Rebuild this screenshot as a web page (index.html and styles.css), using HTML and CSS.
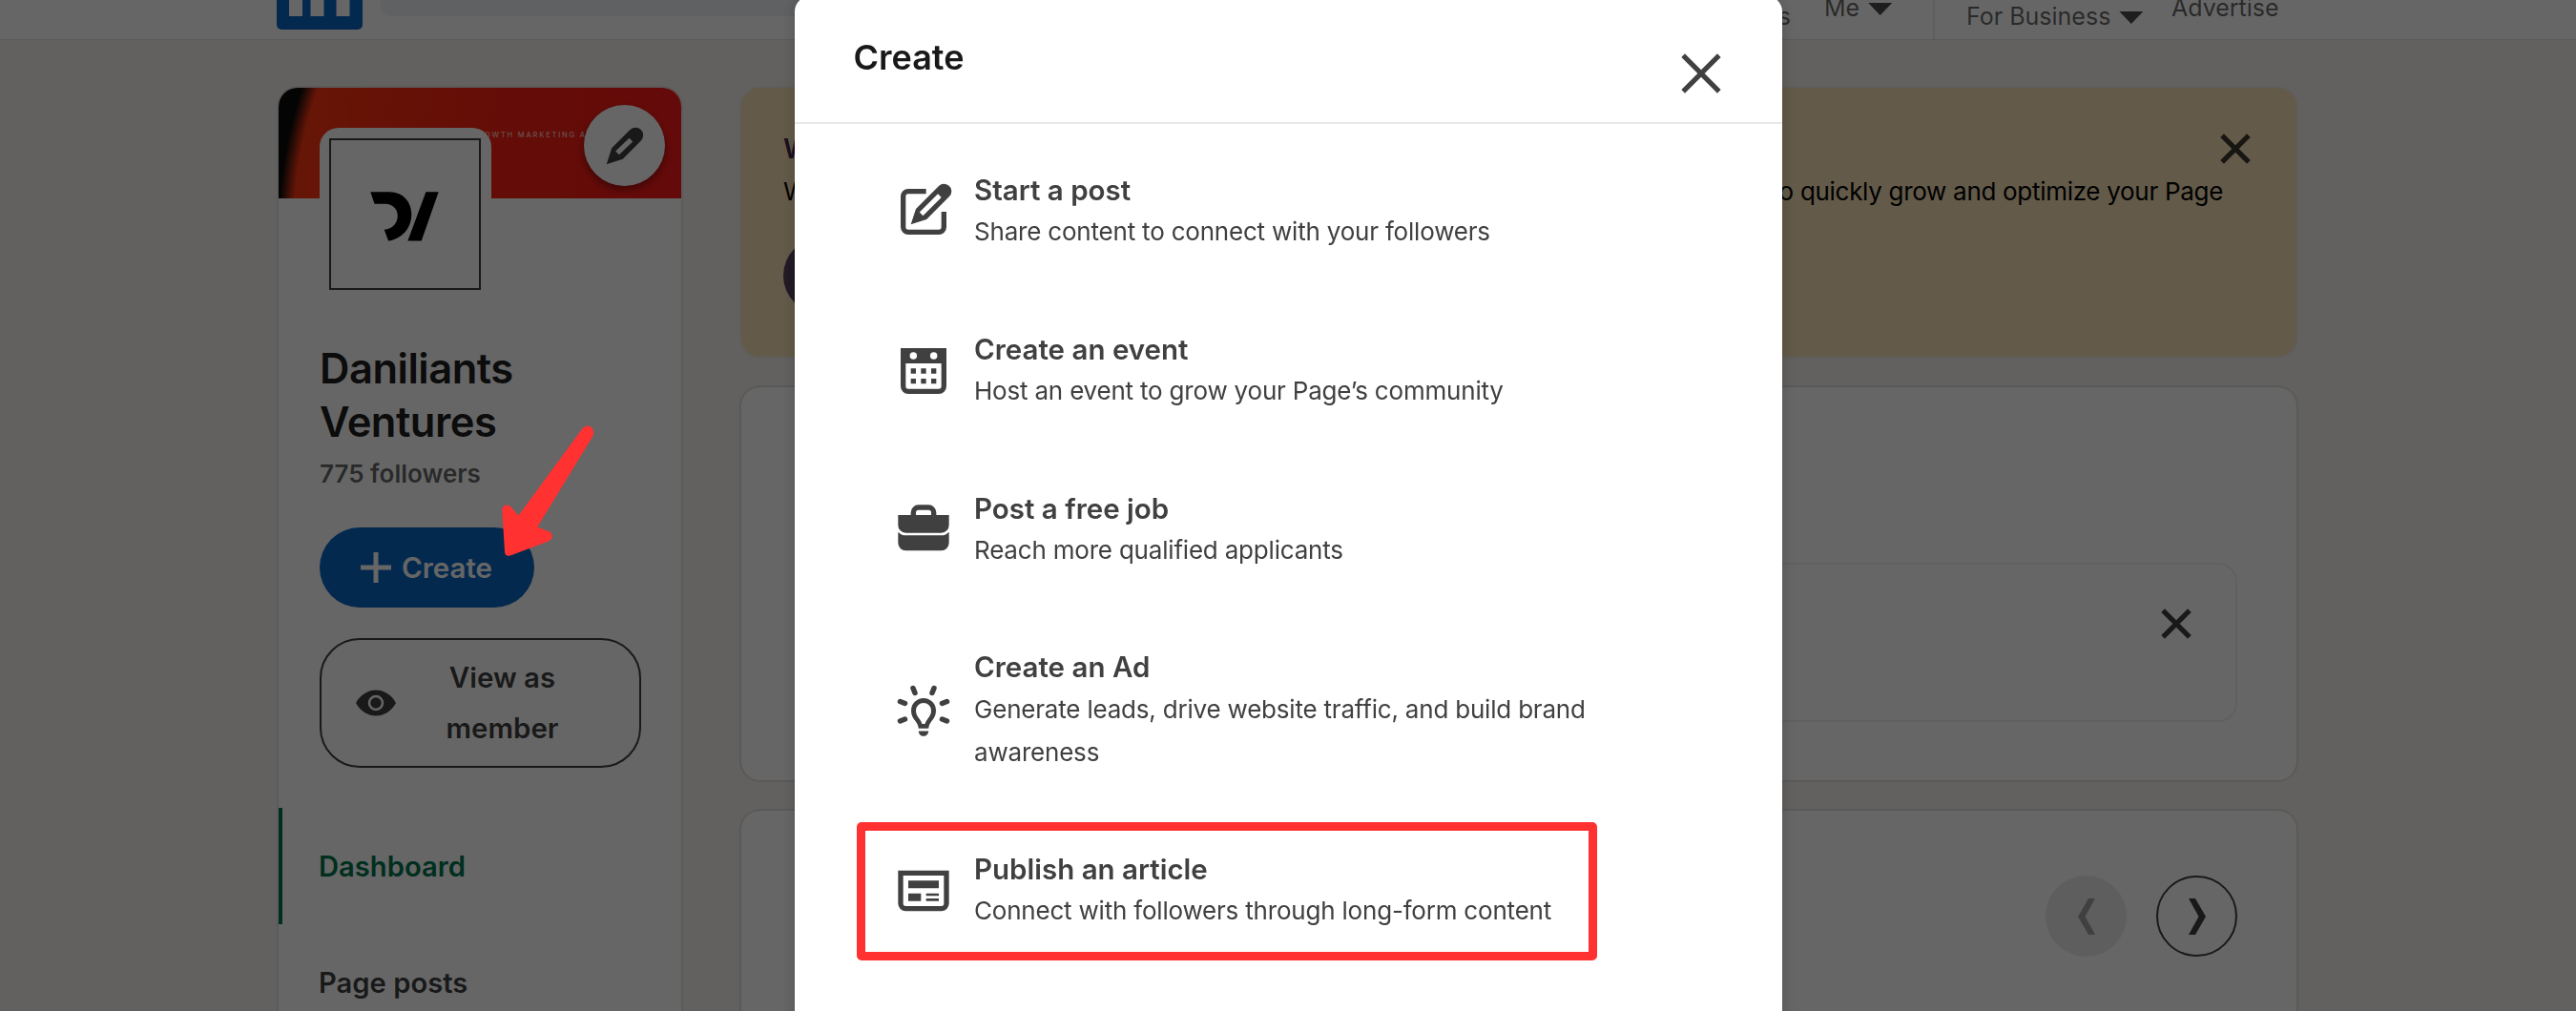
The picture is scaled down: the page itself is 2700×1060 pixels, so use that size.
FILE: index.html
```html
<!DOCTYPE html>
<html lang="en">
<head>
    <meta charset="UTF-8">
    <meta name="viewport" content="width=device-width, initial-scale=1.0">
    <title>Daniliants Ventures: Dashboard</title>
    <link rel="stylesheet" href="styles.css">
</head>
<body>
    <header class="topbar">
        <svg class="brand" viewBox="0 0 90 90">
            <rect width="90" height="90" rx="5" fill="#0a66c2"/>
            <path d="M13 34h14v42H13zM35.500 34h14v42h-14zM62.500 50h14v26h-14z" fill="#fff"/>
        </svg>
        <div class="search"></div>
        <nav class="nav">
            <span class="nav-item nav-low nav-notifications">Notifications</span>
            <span class="nav-item nav-me">Me <i class="caret"></i></span>
            <span class="nav-item nav-low nav-business">For Business <i class="caret"></i></span>
            <span class="nav-item nav-advertise">Advertise</span>
        </nav>
    </header>

    <main class="page">
        <aside class="sidebar">
            <div class="banner">
                <span class="banner-text">GROWTH MARKETING AGENCY</span>
                <button class="edit-banner">
                    <svg viewBox="0 0 16 16" width="44" height="44"><path d="M14.130 1.860a3 3 0 00-4.170 0l-7 7L1 15l6.190-2 6.940-7a3 3 0 000-4.140zm-8.360 9.480l-1.340-1.350L9.650 5 11 6.350z"/></svg>
                </button>
            </div>
            <div class="page-logo">
                <svg viewBox="0 0 160 160">
                    <path d="M42.600 56H63C79 56 87 68 87 80C87 96 76 107 62 109L57.500 96.700C67 96 72 89 72 82C72 74 66 69 59 69H47ZM102.600 56H116.300L97.800 109H83Z"/>
                </svg>
            </div>
            <div class="page-info">
                <h1 class="page-name">Daniliants Ventures</h1>
                <p class="followers">775 followers</p>
                <button class="btn btn-create">
                    <svg viewBox="0 0 32 32" width="32" height="32"><path d="M16 0v32M0 16h32" stroke="#fff" stroke-width="5"/></svg>
                    <span>Create</span>
                </button>
                <button class="btn btn-view">
                    <svg viewBox="0 0 42 28" width="42" height="28">
                        <path d="M0 14C5 5 13 0.500 21 0.500S37 5 42 14C37 23 29 27.500 21 27.500S5 23 0 14z" fill="#404040"/>
                        <circle cx="21" cy="14" r="7" fill="#404040" stroke="#fff" stroke-width="2.500"/>
                    </svg>
                    <span>View as member</span>
                </button>
            </div>
            <a class="side-link active">Dashboard</a>
            <a class="side-link">Page posts</a>
        </aside>

        <section class="content">
            <div class="promo">
                <button class="icon-btn promo-close">
                    <svg viewBox="0 0 16 16" width="42" height="42"><path d="M14 3.410L9.410 8 14 12.590 12.590 14 8 9.410 3.410 14 2 12.590 6.590 8 2 3.410 3.410 2 8 6.590 12.590 2z"/></svg>
                </button>
                <p class="promo-title">W</p>
                <p class="promo-text"><span>W</span><span>to quickly grow and optimize your Page</span></p>
                <div class="promo-badge"></div>
            </div>
            <div class="card card-tasks">
                <div class="task">
                    <svg viewBox="0 0 16 16" width="42" height="42"><path d="M14 3.410L9.410 8 14 12.590 12.590 14 8 9.410 3.410 14 2 12.590 6.590 8 2 3.410 3.410 2 8 6.590 12.590 2z"/></svg>
                </div>
            </div>
            <div class="card card-carousel">
                <button class="round-btn disabled">
                    <svg viewBox="0 0 18 38" width="18" height="38"><path d="M18 0H11L0 19l11 19h7L7.500 19z"/></svg>
                </button>
                <button class="round-btn">
                    <svg viewBox="0 0 18 38" width="18" height="38"><path d="M0 0h7l11 19L7 38H0l10.500-19z"/></svg>
                </button>
            </div>
        </section>
    </main>

    <div class="overlay">
        <div class="modal">
            <div class="modal-header">
                <h2>Create</h2>
                <button class="icon-btn">
                    <svg viewBox="0 0 24 24" width="62" height="62"><path d="M13.420 12L20 18.580 18.580 20 12 13.420 5.420 20 4 18.580 10.580 12 4 5.420 5.420 4 12 10.580 18.580 4 20 5.420z"/></svg>
                </button>
            </div>
            <ul class="options">
                <li class="option">
                    <svg viewBox="0 0 24 24"><path d="M19 12h2v6a3 3 0 01-3 3H6a3 3 0 01-3-3V6a3 3 0 013-3h7v2H6a1 1 0 00-1 1v12a1 1 0 001 1h12a1 1 0 001-1zm4-8a2.910 2.910 0 01-.870 2l-8.940 9L7 17l2-6.140 9-9A3 3 0 0123 4zm-4 2.350L17.640 5l-7.220 7.220 1.350 1.340z"/></svg>
                    <div>
                        <h3>Start a post</h3>
                        <p>Share content to connect with your followers</p>
                    </div>
                </li>
                <li class="option">
                    <svg viewBox="0 0 24 24"><path fill-rule="evenodd" d="M3 3v15a3 3 0 003 3h12a3 3 0 003-3V3zm5 1.600a1.400 1.400 0 110 2.800 1.400 1.400 0 010-2.800zm8 0a1.400 1.400 0 110 2.800 1.400 1.400 0 010-2.800zM5 9h14v9a1 1 0 01-1 1H6a1 1 0 01-1-1zM7 11v2h2v-2zm4 0v2h2v-2zm4 0v2h2v-2zM7 15v2h2v-2zm4 0v2h2v-2zm4 0v2h2v-2z"/></svg>
                    <div>
                        <h3>Create an event</h3>
                        <p>Host an event to grow your Page’s community</p>
                    </div>
                </li>
                <li class="option">
                    <svg viewBox="0 0 24 24"><path d="M17 6V5a3 3 0 00-3-3h-4a3 3 0 00-3 3v1H2v4a3 3 0 003 3h14a3 3 0 003-3V6zM9 5a1 1 0 011-1h4a1 1 0 011 1v1H9zm10 9a4 4 0 003-1.380V17a3 3 0 01-3 3H5a3 3 0 01-3-3v-4.380A4 4 0 005 14z"/></svg>
                    <div>
                        <h3>Post a free job</h3>
                        <p>Reach more qualified applicants</p>
                    </div>
                </li>
                <li class="option">
                    <svg viewBox="0 0 64 64">
                        <g fill="none" stroke="#404040" stroke-width="5.500" stroke-linecap="round">
                            <path d="M21 8.500l2 5M43 8.500l-2 5M7.500 22.500l5 2M56.500 22.500l-5 2M7.500 43l5-2M56.500 43l-5-2"/>
                        </g>
                        <path fill-rule="evenodd" d="M32 19a13 13 0 00-13 13c0 5 2 8 4.500 11 2 2.500 3 5 3.300 7.800h10.400c.3-2.800 1.300-5.300 3.300-7.800C43 40 45 37 45 32a13 13 0 00-13-13zm0 5a8 8 0 018 8c0 4-1.700 6-3.500 8.500-1.500 2-2.400 3.500-2.900 5.500h-3.200c-.5-2-1.400-3.500-2.900-5.500C25.700 38 24 36 24 32a8 8 0 018-8zM26.800 53.500h10.400c0 3-2.200 5.300-5.200 5.300s-5.200-2.300-5.200-5.300z"/>
                    </svg>
                    <div>
                        <h3>Create an Ad</h3>
                        <p>Generate leads, drive website traffic, and build brand awareness</p>
                    </div>
                </li>
                <li class="option highlighted">
                    <svg viewBox="0 0 24 24"><path fill-rule="evenodd" d="M2 4v13a3 3 0 003 3h14a3 3 0 003-3V4zm2 2h16v11a1 1 0 01-1 1H5a1 1 0 01-1-1zM6 8v3h12V8zM6 13v3h5v-3zM13 13v1h5v-1zM13 15v1h5v-1z"/></svg>
                    <div>
                        <h3>Publish an article</h3>
                        <p>Connect with followers through long-form content</p>
                    </div>
                </li>
            </ul>
        </div>
    </div>

    <!-- arrow pointing at the Create button -->
    <svg class="arrow" viewBox="0 0 100 140">
        <path d="M84.500 7.500Q90 1 95 5Q99 9 96 15L38.300 109.500L51 114.500Q54 116 53.700 119Q53.500 122 51 124L10 139.500Q4.500 141 4 135.500L1.300 92Q1.500 87 5.500 86.500Q8 86 10.500 88.500L18.500 97.500Z"/>
    </svg>
</body>
</html>
```
FILE: styles.css
```css
*,
*::before,
*::after {
    box-sizing: border-box;
}

:root {
    --text: #404040;
    --green: #01754f;
    --blue: #0a66c2;
    --red: #ff3131;
}

body {
    margin: 0;
    height: 1060px;
    overflow: hidden;
    background: #f4f2ee;
    color: rgba(0, 0, 0, 0.9);
    font-family: Inter, "Liberation Sans", sans-serif;
    font-size: 26px;
}

h1, h2, h3, p, ul {
    margin: 0;
    padding: 0;
}

svg {
    display: block;
    fill: currentColor;
}

button {
    font-family: inherit;
    border: none;
    padding: 0;
    background: none;
    color: rgba(0, 0, 0, 0.75);
}

/* Top bar */
.topbar {
    display: flex;
    align-items: flex-start;
    height: 41px;
    padding: 0 310px 0 290px;
    background: #fff;
    box-shadow: 0 0 2px rgba(0, 0, 0, 0.2);
}

.brand {
    width: 90px;
    height: 90px;
    margin-top: -59px;
}

.search {
    width: 590px;
    height: 77px;
    margin: -60px 0 0 19px;
    border-radius: 10px;
    background: #edf3f8;
}

.nav {
    display: flex;
    align-items: flex-start;
    height: 41px;
    margin-left: auto;
}

.nav-item {
    display: flex;
    height: 30px;
    margin-top: -7px;
    font-size: 25px;
    line-height: 30px;
    white-space: nowrap;
    color: rgba(0, 0, 0, 0.6);
}

.nav-low {
    margin-top: 2px;
}

.nav-notifications {
    margin-right: 35px;
}

.nav-me {
    width: 114px;
}

.nav-business {
    width: 250px;
    height: 41px;
    margin-top: 0;
    padding: 2px 0 0 33px;
    border-left: 2px solid #ebebeb;
}

.nav-advertise {
    width: 114px;
}

.caret {
    margin: 10px 0 0 9px;
    width: 25px;
    height: 13px;
    background: rgba(0, 0, 0, 0.7);
    clip-path: polygon(0 0, 100% 0, 50% 100%);
}

/* Page */
.page {
    display: flex;
    gap: 63px;
    height: 1019px;
    padding: 51px 293px 0 292px;
    overflow: hidden;
}

.sidebar {
    width: 422px;
    background: #fff;
    border-radius: 20px 20px 0 0;
    box-shadow: 0 0 0 2px rgba(0, 0, 0, 0.06);
}

.banner {
    position: relative;
    height: 116px;
    border-radius: 20px 20px 0 0;
    overflow: hidden;
    background:
        radial-gradient(ellipse 400px 430px at 408px 150px, transparent 98%, #0c0c0c 102%),
        linear-gradient(95deg, #ff3c12 0, #ff3010 20%, #fb2012 55%, #fb1a1a 100%);
}

.banner-text {
    position: absolute;
    left: 202px;
    top: 45px;
    font-size: 7.500px;
    line-height: 10px;
    letter-spacing: 1.800px;
    font-weight: 500;
    color: #ffc9c0;
    white-space: nowrap;
}

.edit-banner {
    position: absolute;
    right: 17px;
    top: 18px;
    width: 85px;
    height: 85px;
    display: flex;
    align-items: center;
    justify-content: center;
    border-radius: 50%;
    background: #fff;
    box-shadow: 0 4px 8px rgba(0, 0, 0, 0.4);
}

.page-logo {
    position: relative;
    width: 180px;
    height: 180px;
    margin: -74px 0 0 43px;
    padding: 11px 10px;
    background: #fff;
    border-radius: 20px 20px 0 0;
    color: #000;
}

.page-logo svg {
    width: 159px;
    height: 159px;
    border: 2px solid #404040;
}

.page-info {
    padding: 44px 42px 0 43px;
}

.page-name {
    width: 260px;
    font-size: 43.500px;
    line-height: 56px;
    font-weight: 600;
    letter-spacing: -0.500px;
}

.followers {
    margin-top: 7px;
    line-height: 40px;
    font-weight: 600;
    color: rgba(0, 0, 0, 0.6);
}

.btn {
    display: flex;
    align-items: center;
    font-size: 29.500px;
    font-weight: 600;
}

.btn-create {
    width: 225px;
    height: 84px;
    margin-top: 36px;
    padding-left: 43px;
    gap: 11px;
    border-radius: 42px;
    background: var(--blue);
    color: #fff;
}

.btn-view {
    width: 337px;
    height: 136px;
    margin-top: 32px;
    padding: 0 36px;
    gap: 4px;
    border: 2px solid #404040;
    border-radius: 42px;
    line-height: 53px;
}

.btn-view span {
    flex: 1;
    padding: 0 40px;
}

.side-link {
    display: block;
    height: 122px;
    padding-left: 42px;
    font-size: 29.200px;
    line-height: 123px;
    font-weight: 600;
    color: rgba(0, 0, 0, 0.75);
}

.side-link.active {
    margin-top: 42px;
    padding-left: 38px;
    border-left: 4px solid var(--green);
    color: var(--green);
}

/* Main column */
.content {
    flex: 1;
    display: flex;
    flex-direction: column;
    gap: 32px;
}

.promo {
    position: relative;
    flex: none;
    height: 282px;
    padding: 42px 77px 0 44px;
    border-radius: 20px;
    background: #f8e1b6;
    box-shadow: 0 0 0 2px rgba(0, 0, 0, 0.03);
}

.promo-close {
    position: absolute;
    right: 43px;
    top: 43px;
}

.promo-title {
    height: 44px;
    line-height: 44px;
    font-size: 28px;
    font-weight: 600;
    color: #44264f;
}

.promo-text {
    display: flex;
    justify-content: space-between;
    line-height: 46px;
    letter-spacing: -0.300px;
    color: #000;
}

.promo-badge {
    width: 80px;
    height: 80px;
    margin-top: 25px;
    border-radius: 50%;
    background: #56405b;
}

.card {
    flex: none;
    background: #fff;
    border-radius: 20px;
    box-shadow: 0 0 0 2px rgba(0, 0, 0, 0.08);
}

.card-tasks {
    height: 412px;
    padding: 184px 62px 0;
}

.task {
    display: flex;
    justify-content: flex-end;
    height: 167px;
    padding: 41px 41px 0;
    border: 2px solid #f0f0f0;
    border-radius: 20px;
    color: rgba(0, 0, 0, 0.75);
}

.card-carousel {
    display: flex;
    justify-content: flex-end;
    gap: 31px;
    height: 300px;
    padding: 68px 62px 0;
}

.round-btn {
    display: flex;
    align-items: center;
    justify-content: center;
    width: 85px;
    height: 85px;
    border: 2px solid #404040;
    border-radius: 50%;
}

.round-btn.disabled {
    border: none;
    background: #ebebeb;
    color: #a0a0a0;
}

/* Modal */
.overlay {
    position: fixed;
    inset: 0;
    display: flex;
    justify-content: center;
    overflow: hidden;
    background: rgba(0, 0, 0, 0.6);
}

.modal {
    width: 1035px;
    height: 1084px;
    margin-top: -4px;
    border-radius: 16px;
    background: #fff;
    box-shadow: 0 0 16px rgba(0, 0, 0, 0.2);
    color: var(--text);
}

.modal-header {
    display: flex;
    justify-content: space-between;
    height: 134px;
    padding: 41px 54px 0 62px;
    border-bottom: 2px solid #e8e8e8;
}

.modal-header h2 {
    font-size: 36px;
    line-height: 46px;
    font-weight: 600;
    color: #191919;
}

.modal-header .icon-btn {
    height: 62px;
    margin-top: 9px;
    color: var(--text);
}

.options {
    padding: 9px 0 0;
    list-style: none;
}

.option {
    position: relative;
    display: flex;
    align-items: center;
    gap: 21px;
    padding: 40.200px 140px 40.200px 103.500px;
}

.option > svg {
    flex: none;
    width: 64px;
    height: 64px;
}

.option h3 {
    font-size: 29.500px;
    line-height: 41.300px;
    font-weight: 600;
}

.option p {
    max-width: 670px;
    line-height: 45px;
    letter-spacing: -0.200px;
}

.option.highlighted::after {
    content: "";
    position: absolute;
    left: 65px;
    top: 11px;
    width: 776px;
    height: 145px;
    border: 9px solid var(--red);
    border-radius: 5px;
}

.arrow {
    position: absolute;
    left: 525px;
    top: 443px;
    width: 100px;
    height: 140px;
    fill: var(--red);
}
```
